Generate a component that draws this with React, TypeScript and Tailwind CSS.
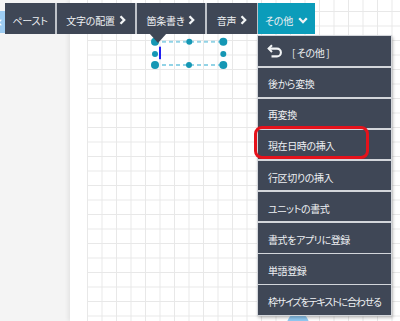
import React from 'react';

const font = "font-['Noto_Sans_CJK_JP','Noto_Sans',sans-serif] [font-feature-settings:'palt']";

const ChevronRight: React.FC = () => (
  <svg width="7" height="10" viewBox="0 0 7 10" className="ml-[4px] shrink-0">
    <polyline points="1.5,1.2 5.2,5 1.5,8.8" fill="none" stroke="#f2f4f6" strokeWidth="2.3" />
  </svg>
);

const ChevronDown: React.FC = () => (
  <svg width="10" height="7" viewBox="0 0 10 7" className="ml-[5px] shrink-0">
    <polyline points="1.2,1.3 5,5.2 8.8,1.3" fill="none" stroke="#f2f4f6" strokeWidth="2.3" />
  </svg>
);

const toolbarItems = [
  { label: 'ペースト', w: 'w-[50px]', chevron: false },
  { label: '文字の配置', w: 'w-[78px]', chevron: true },
  { label: '箇条書き', w: 'w-[68px]', chevron: true },
  { label: '音声', w: 'w-[50px]', chevron: true },
];

// tight: kana-heavy labels need narrower tracking to fit the menu
const menuItems = [
  { label: '後から変換', tight: false },
  { label: '再変換', tight: false },
  { label: '現在日時の挿入', tight: false },
  { label: '行区切りの挿入', tight: false },
  { label: 'ユニットの書式', tight: false },
  { label: '書式をアプリに登録', tight: false },
  { label: '単語登録', tight: false },
  { label: '枠サイズをテキストに合わせる', tight: true },
];

export default function App() {
  return (
    <div className={`relative flex h-[321px] w-[400px] overflow-hidden bg-white ${font}`}>
      {/* side panel */}
      <div className="w-[70px] shrink-0 bg-[#f4f4f4]" />
      {/* page */}
      <div className="flex-1 bg-white pl-[17px] shadow-[-2px_0_4px_rgba(0,0,0,0.07)]">
        <div className="h-full bg-[linear-gradient(to_right,#e8e8e8_1px,transparent_1px),linear-gradient(to_bottom,#e8e8e8_1px,transparent_1px)] bg-[size:14.5px_14.5px] bg-[position:0px_11px]" />
      </div>

      {/* hidden tab on the left */}
      <div className="absolute left-[-14px] top-[11px] flex h-[22px] w-[24px] items-center justify-end rounded-[4px] bg-[#9dccf2] pr-[8px]">
        <svg width="4" height="7" viewBox="0 0 4 7">
          <polyline points="3.3,0.6 0.8,3.5 3.3,6.4" fill="none" stroke="#ffffff" strokeWidth="1.2" />
        </svg>
      </div>

      {/* selection on the canvas */}
      <svg className="absolute left-[148px] top-[35px]" width="82" height="37" viewBox="0 0 82 37">
        <g stroke="#92d3e6" strokeWidth="2" strokeDasharray="4 3" fill="none">
          <line x1="7" y1="6.7" x2="75.3" y2="6.7" />
          <line x1="7" y1="30" x2="75.3" y2="30" />
        </g>
        <g fill="#1597b4">
          <circle cx="7" cy="6.7" r="4" />
          <circle cx="41.3" cy="6.7" r="3" />
          <circle cx="75.3" cy="6.7" r="4" />
          <circle cx="7" cy="19" r="3" />
          <circle cx="75.3" cy="19" r="3" />
          <circle cx="7" cy="30" r="4" />
          <circle cx="41" cy="30" r="3" />
          <circle cx="75.3" cy="30" r="4" />
        </g>
        <rect x="11" y="11.7" width="2" height="12.5" fill="#2121f0" />
      </svg>

      {/* toolbar pointer */}
      <div className="absolute left-[149px] top-[33px] h-0 w-0 border-x-[9.5px] border-t-[10px] border-x-transparent border-t-[#3f4756]" />

      {/* toolbar */}
      <div className="absolute left-[5px] top-[3px] flex h-[31px] gap-[2px] bg-[#bfc3c9] text-[10px] tracking-[-0.2px] text-[#eef0f3]">
        {toolbarItems.map((it) => (
          <div key={it.label} className={`flex ${it.w} items-center justify-center whitespace-nowrap bg-[#3f4756] pt-[3px]`}>
            <span>{it.label}</span>
            {it.chevron && <ChevronRight />}
          </div>
        ))}
        <div className="-ml-px flex w-[57px] items-center justify-center bg-[#0b9cba] pt-[3px]">
          <span>その他</span>
          <ChevronDown />
        </div>
      </div>

      {/* floating button peeking below the menu */}
      <div className="absolute left-[287px] top-[313px] h-[22px] w-[22px] rounded-full bg-[#8fc8f1]" />

      {/* dropdown menu */}
      <div className="absolute left-[257px] top-[35px] flex w-[135px] flex-col gap-[1.5px] bg-[#d3d6db] p-px text-[10px] tracking-[-0.4px] text-[#eef0f3] shadow-[1px_2px_3px_rgba(0,0,0,0.25)]">
        <div className="flex h-[30px] items-center bg-[#3f4756] pl-[9px]">
          <svg width="16" height="14" viewBox="0 0 16 14" className="shrink-0">
            <polyline points="5,1.2 1.6,4.6 5,8" fill="none" stroke="#f2f4f6" strokeWidth="2" />
            <path d="M1.8 4.6 H10 a3.9 3.9 0 0 1 0 7.8 H4.5" fill="none" stroke="#f2f4f6" strokeWidth="2.1" />
          </svg>
          <span className="ml-[9px] pt-[2px]">[ その他 ]</span>
        </div>
        {menuItems.map((it) => (
          <div
            key={it.label}
            className={`flex h-[29.6px] items-center whitespace-nowrap bg-[#3f4756] pl-[10px] pt-[3px] ${it.tight ? 'tracking-[-1.2px]' : ''}`}
          >
            {it.label}
          </div>
        ))}
      </div>

      {/* highlight */}
      <div className="absolute left-[254px] top-[126px] h-[33px] w-[115px] rounded-[8px] border-[3px] border-[#e5121b]" />
    </div>
  );
}
